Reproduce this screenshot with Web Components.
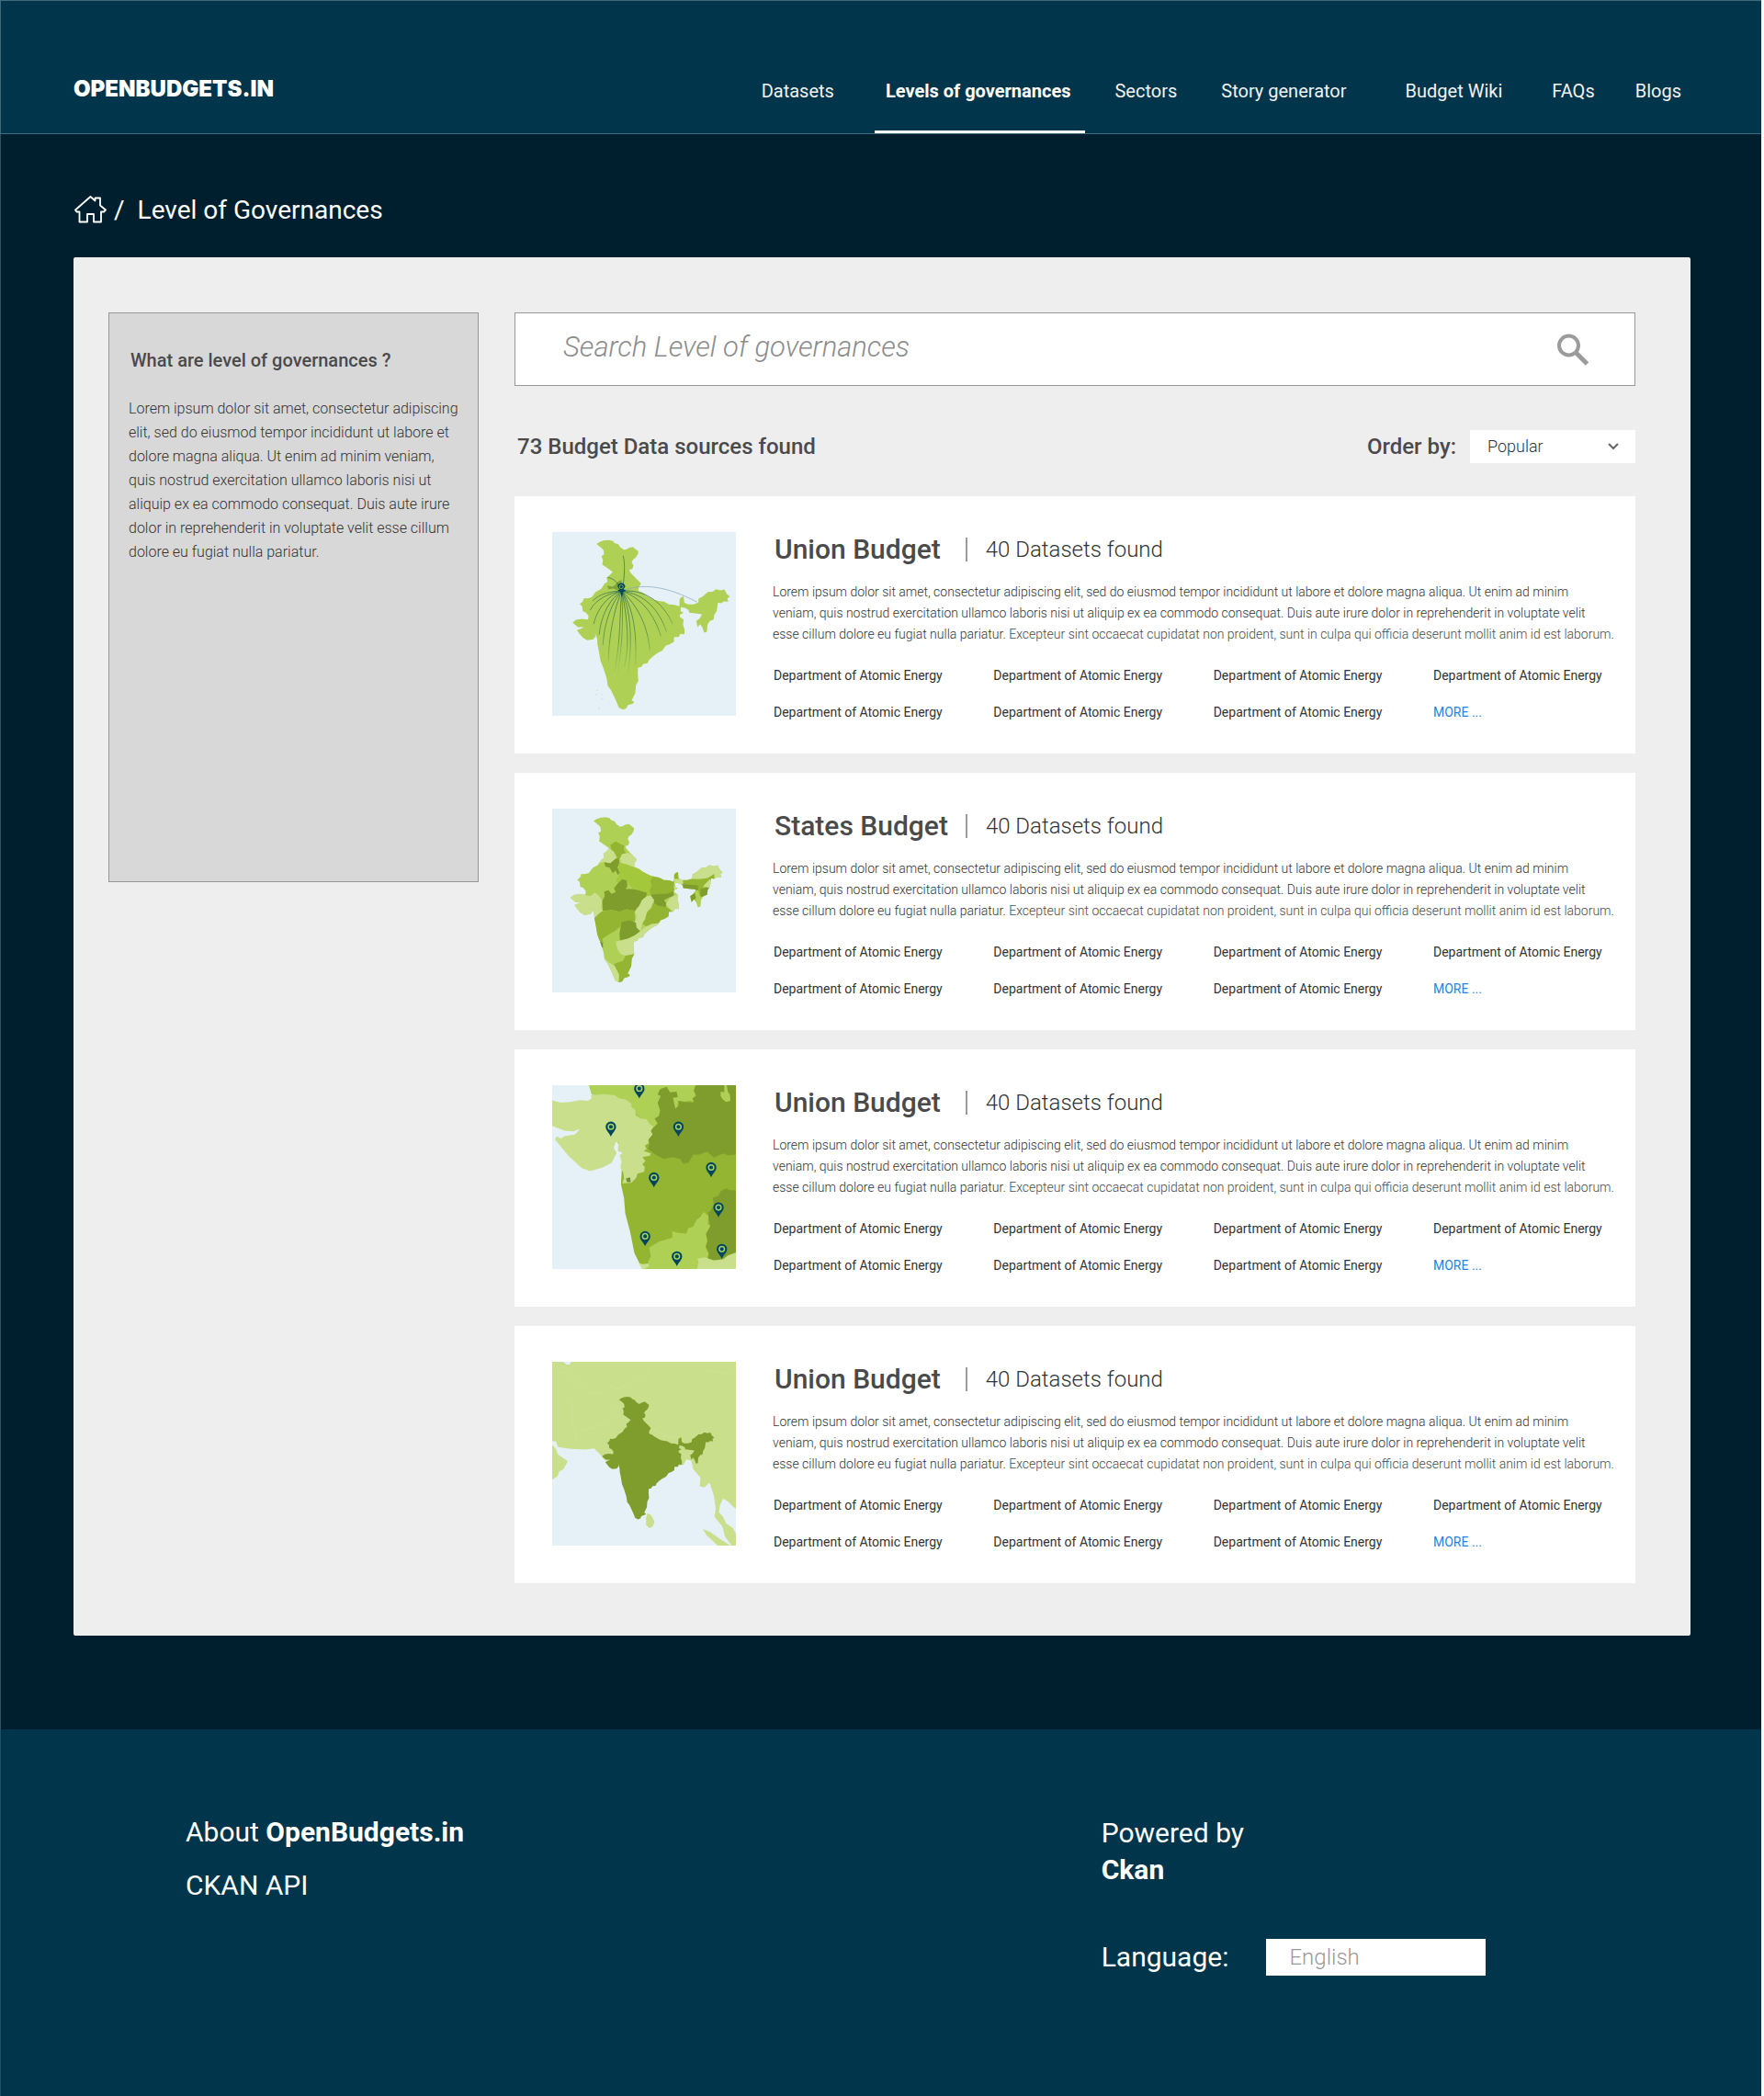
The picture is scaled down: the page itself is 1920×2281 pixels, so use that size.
<!DOCTYPE html>
<html lang="en">
<head>
<meta charset="utf-8">
<meta name="viewport" content="width=device-width, initial-scale=1">
<title>Level of Governances - OpenBudgets.in</title>
<style>
  html { background: #fff; }
  body { margin: 0; font-family: Roboto, "Liberation Sans", sans-serif; color: #4a4a4a; }
</style>
</head>
<body>
<ob-page>
  <ob-header slot="header"></ob-header>
  <ob-breadcrumb slot="crumb">Level of Governances</ob-breadcrumb>
  <ob-note slot="aside" heading="What are level of governances ?">Lorem ipsum dolor sit amet, consectetur adipiscing elit, sed do eiusmod tempor incididunt ut labore et dolore magna aliqua. Ut enim ad minim veniam, quis nostrud exercitation ullamco laboris nisi ut aliquip ex ea commodo consequat. Duis aute irure dolor in reprehenderit in voluptate velit esse cillum dolore eu fugiat nulla pariatur.</ob-note>
  <ob-search></ob-search>
  <ob-results-bar>73 Budget Data sources found</ob-results-bar>
  <ob-list>
    <ob-budget-card map="union">Union Budget</ob-budget-card>
    <ob-budget-card map="states">States Budget</ob-budget-card>
    <ob-budget-card map="cities">Union Budget</ob-budget-card>
    <ob-budget-card map="asia">Union Budget</ob-budget-card>
  </ob-list>
  <ob-footer slot="footer"></ob-footer>
</ob-page>

<script>
const define = (name, render) => customElements.define(name, class extends HTMLElement {
  connectedCallback() {
    if (this.shadowRoot) return;
    this.attachShadow({ mode: 'open' }).innerHTML = render(this);
  }
});

/* Outline of India, shared by three of the maps */
const INDIA = 'M181 98L190 92 203 87 220 85 235 88 240 95 252 99 258 108 270 117 280 115 288 110 300 108 306 113 318 122 316 132 310 142 300 150 296 158 302 168 298 180 288 182 292 191 300 200 312 212 327 227 319 240 318 251 334 258 345 267 362 276 372 281 388 285 402 287 418 296 436 297 452 302 453 278 458 272 466 269 468 290 480 296 498 296 514 290 515 277 528 270 545 255 560 254 572 246 586 250 600 247 606 260 617 270 609 276 612 287 598 286 588 292 578 290 576 305 574 318 566 330 564 345 552 350 544 362 542 385 533 388 528 372 520 360 512 370 507 350 518 342 526 328 510 326 484 323 482 314 470 307 457 305 456 318 466 323 453 330 454 337 466 345 464 362 469 378 469 393 455 392 450 402 435 402 434 418 420 426 408 430 396 447 380 455 365 466 352 478 348 488 334 490 328 500 317 502 316 520 318 545 310 560 308 585 296 610 304 614 300 620 284 625 278 636 267 640 254 633 248 618 240 600 228 575 218 562 214 536 204 505 194 480 189 450 184 425 183 408 176 388 178 400 170 410 150 413 136 404 124 390 117 380 130 375 140 370 120 370 103 355 114 346 132 343 153 345 155 333 146 322 136 318 134 302 126 295 136 286 140 275 152 276 165 272 178 255 196 245 207 228 217 222 214 208 222 202 234 190 218 178 200 166 202 150 197 138 206 132 204 118 196 110Z';

const C = { sea: '#e5f0f7', pale: '#c9df8c', lime: '#aed155', mid: '#a3c83b', green: '#93b532', dark: '#7f9d2c', ink: '#00465c' };
const shape = (fill, d) => `<path fill="${fill}" d="${d}"/>`;
const pin = (x, y) => `<g transform="translate(${x} ${y})"><path fill="${C.ink}" d="M0 29C-5 17-17 9-17-3A17 17 0 0 1 17-3C17 9 5 17 0 29Z"/><circle cy="-3" r="8.5" fill="none" stroke="#a9cf6a" stroke-width="4.5"/></g>`;
const ray = (d, w = 1.8) => `<path d="M264 252${d}" stroke-width="${w}"/>`;

const MAPS = {
  union: () => `<svg viewBox="36 59 601 601" role="img" aria-label="Map of India">
    <defs><radialGradient id="r" gradientUnits="userSpaceOnUse" cx="264" cy="252" r="290"><stop offset="0" stop-color="#0b4a50"/><stop offset=".55" stop-color="#2c6a47" stop-opacity=".9"/><stop offset="1" stop-color="#5f9d50" stop-opacity="0"/></radialGradient></defs>
    ${shape(C.lime, INDIA)}
    ${shape('#7fa13a', 'M216 234L232 238 240 234 250 222 262 215 266 240 250 250 236 244 220 246Z')}
    <g fill="none" stroke="url(#r)">
      ${ray('C272 215 276 165 268 136')}${ray('C250 222 236 210 218 208')}
      ${ray('C230 252 190 260 168 285')}${ray('C228 258 180 275 160 315')}${ray('C228 262 185 300 172 360')}
      ${ray('C226 276 195 330 190 395')}${ray('C234 285 206 350 202 430')}${ray('C246 290 222 380 220 480')}
      ${ray('C256 320 262 400 240 515')}${ray('C268 340 268 420 246 545', 1.4)}${ray('C282 340 290 430 272 500')}${ray('C298 330 300 440 276 570')}
      ${ray('C310 320 312 420 308 495')}${ray('C316 300 350 370 355 445')}${ray('C330 275 370 330 392 400')}
      ${ray('C335 260 385 310 410 385')}${ray('C340 245 400 290 430 360')}
    </g>
    <path d="M264 252C330 225 410 235 510 288" fill="none" stroke="#7fa5bd" stroke-width="2"/>
    <path fill="${C.ink}" d="M250 250L257 246 250 238A12.500 12.500 0 1 1 275 238L269 246 278 250 268 254 264 272 259 254Z"/><circle cx="262" cy="238" r="6" fill="none" stroke="#8fbf6a" stroke-width="2.500"/>
    <g fill="#bfdcb0"><circle cx="183" cy="577" r="1.800"/><circle cx="180" cy="590" r="2"/><circle cx="198" cy="590" r="1.500"/><circle cx="201" cy="604" r="1.800"/><circle cx="190" cy="636" r="2"/></g></svg>`,

  states: () => `<svg viewBox="36 59 601 601" role="img" aria-label="Map of Indian states">
    <defs><clipPath id="c"><path transform="matrix(.969 0 0 .975 -4 4)" d="${INDIA}"/></clipPath></defs>
    <g clip-path="url(#c)"><path fill="${C.lime}" d="M36 59H637V660H36Z"/>
    ${shape(C.green, 'M226 178L245 166 262 176 272 180 270 192 278 206 264 212 258 222 246 216 238 200 230 195Z')}
    ${shape(C.pale, 'M190 236L200 190 222 188 238 200 246 216 240 226 226 238 206 234Z')}
    ${shape(C.pale, 'M258 222L264 208 285 203 320 225 308 256 290 248 276 240 262 238Z')}
    ${shape(C.dark, 'M206 234L226 238 240 226 254 218 256 236 250 250 258 270 250 275 244 262 234 270 224 252 210 248Z')}
    ${shape(C.mid, 'M256 236L276 240 308 252 372 278 356 296 362 310 354 326 358 342 345 345 340 332 318 326 300 320 288 308 280 294 266 290 252 302 244 296 258 272 250 252Z')}
    ${shape(C.green, 'M370 276L384 286 440 294 438 318 432 332 410 340 385 338 358 340 354 326 362 310 356 296Z')}
    ${shape(C.dark, 'M358 340L385 338 410 338 432 330 434 344 418 350 402 358 410 370 408 382 384 378 370 370 366 356Z')}
    ${shape(C.pale, 'M436 290L470 288 470 400 428 394 408 372 420 352 434 344 444 340 434 318Z')}
    ${shape(C.green, 'M432 265H450V288H436Z')}
    ${shape(C.pale, 'M90 330L160 345 176 333 190 345 200 360 196 380 200 395 192 412 180 418 90 420Z')}
    ${shape(C.dark, 'M200 360L208 345 206 330 220 326 230 338 244 332 238 320 252 302 266 290 280 294 282 312 276 322 300 322 318 326 345 334 344 348 330 358 322 375 312 386 306 396 280 388 256 396 232 390 202 394Z')}
    ${shape(C.green, 'M170 420L196 396 232 390 256 396 280 388 306 392 306 412 310 430 290 426 262 430 258 446 240 460 222 470 200 485 204 500 190 510Z')}
    ${shape('#6f8752', 'M190 494L200 498 203 512 196 514Z')}
    ${shape(C.green, 'M345 398L362 384 366 368 384 378 408 380 425 392 430 420 390 434 362 440 346 446 330 434Z')}
    ${shape(C.pale, 'M330 358L344 346 358 344 370 358 358 382 346 398 340 420 330 436 326 460 312 448 302 440 312 412 306 396 320 378Z')}
    ${shape(C.dark, 'M262 430L290 424 310 432 312 448 324 460 306 474 284 484 258 492 256 470Z')}
    ${shape(C.pale, 'M244 494L258 490 284 484 306 474 324 460 340 446 362 436 390 432 340 500 308 520 304 536 284 542 262 536 250 520Z')}
    ${shape(C.green, 'M232 572L246 564 268 556 276 540 306 534 320 560 290 620 250 640 256 604Z')}
    ${shape(C.pale, 'M204 545L222 562 240 572 254 600 254 640 225 610Z')}
    ${shape(C.pale, 'M490 285L520 240 600 235 600 290 570 295 566 275 540 288 512 290Z')}
    ${shape(C.green, 'M464 292L520 290 545 286 566 272 566 288 546 298 530 315 520 345 512 322 464 308Z')}
    ${shape(C.dark, 'M460 306L512 310 514 326 460 326Z')}${shape(C.dark, 'M522 322L550 312 545 350 520 346Z')}
    ${shape(C.pale, 'M530 312L552 290 562 298 548 318Z')}${shape(C.dark, 'M484 346L502 334 506 348 500 366 484 366Z')}
    </g></svg>`,

  cities: () => `<svg viewBox="31 61 601 601" role="img" aria-label="Map of western India with city pins">
    ${shape(C.green, 'M200 61H632V662H326L300 610 286 540 270 480 266 430 256 385Z')}
    ${shape(C.lime, 'M151 61H500L497 76 500 95 494 102 496 116 482 112 466 114 448 112 440 126 444 138 434 136 420 110 396 130 376 190 360 200 330 180 290 140 200 100 160 92Z')}
    ${shape(C.sea, 'M240 240L262 280 256 384 200 384 200 300Z')}
    ${shape(C.pale, 'M31 110L58 118 90 116 122 110 148 112 160 104 158 94 200 90 236 94 250 104 272 108 290 122 290 132 303 142 304 158 320 170 340 172 350 188 362 196 354 212 360 222 346 238 346 252 334 258 340 270 330 276 354 284 350 292 326 296 336 308 326 320 334 328 332 344 310 350 306 364 290 380 260 382 266 366 264 348 254 330 258 312 252 290 262 282 246 276 248 250 240 246 232 266 242 282 226 314 196 330 156 342 128 332 84 292 58 260 40 238 46 228 60 236 70 228 106 222 122 204 100 212 72 210 31 194Z')}
    ${shape('#748f3a', 'M272 366L286 362 288 378 276 378Z')}
    ${shape(C.dark, 'M500 61H632V288L606 290 590 284 560 298 538 278 512 288 492 288 478 314 460 318 450 302 424 296 396 302 366 286 344 268 350 250 346 240 360 222 354 210 376 186 366 170 380 162 384 144 376 118 386 96 376 92 384 74 406 66 416 84 438 82 442 100 426 102 434 138 446 126 442 112 460 116 494 118 490 104 502 96 494 78Z')}
    ${shape(C.lime, 'M582 82L594 84 594 61 602 61 606 84 612 90 614 112 600 116 588 106 582 96Z')}
    ${shape(C.dark, 'M632 404L612 404 600 398 584 406 574 422 556 430 560 452 548 472 540 478 548 520 532 548 540 570 534 588 544 610 540 630 632 640Z')}
    ${shape(C.lime, 'M330 662L346 654 344 640 354 620 348 592 382 572 424 560 424 538 444 544 470 546 476 528 492 524 504 500 514 494 526 476 542 488 540 514 548 522 534 546 538 570 532 590 542 612 534 662Z')}
    ${shape(C.pale, 'M504 662L510 640 506 628 530 624 560 634 590 630 606 618 632 608V662Z')}
    ${shape(C.pale, 'M314 642L326 646 346 644 348 654 332 662H326Z')}
    ${[[316, 75], [223, 200], [444, 200], [364, 366], [551, 333], [575, 464], [335, 558], [439, 624], [586, 600]].map(p => pin(...p)).join('')}</svg>`,

  asia: () => `<svg viewBox="31 61 601 601" role="img" aria-label="Map of India within Asia">
    ${shape(C.pale, 'M31 61H632V542L620 532 606 518 590 508 580 530 576 552 590 568 600 590 622 604 632 624V662H618L596 632 588 600 562 568 566 540 560 500 546 456 528 472 514 468 516 440 492 412 486 384 470 380 460 398 380 400 250 400 200 380 190 366 168 344 140 348 90 346 50 340 44 322 31 320Z')}
    ${shape(C.sea, 'M66 61H94L88 70 78 70Z')}
    ${shape(C.sea, 'M242 400L440 397 432 412 430 440 380 560 240 560Z')}
    ${shape(C.pale, 'M31 332L42 344 50 364 82 386 68 412 54 420 48 436 31 446Z')}
    ${shape(C.pale, 'M342 556L354 562 366 584 360 600 348 605 338 594 338 572Z')}
    ${shape(C.pale, 'M524 608L548 618 580 640 614 662H572L556 646 536 628Z')}
    <g fill="none" stroke="#cfe39a" stroke-width="2"><path d="M40 100L68 92 90 104 110 130 150 160 190 165 220 140 250 150 300 120 340 100 352 78"/><path d="M100 200L96 250 110 300 104 330M100 200L60 160M106 286L160 280 200 262 240 210"/><path d="M340 270L400 300 440 310M540 90L620 100"/></g>
    <path fill="${C.dark}" transform="matrix(.713 0 0 .722 121 114)" d="${INDIA}"/></svg>`
};

define('ob-page', () => `
<style>
  :host { display: flex; flex-direction: column; min-height: 100vh; margin-right: 3px; background: #001f2e; }
  .edge { border-left: 1px solid #2f5160; flex: 1; padding-bottom: 102px; }
  .panel { display: grid; grid-template-columns: 403px minmax(0, 1fr); gap: 39px; align-items: start; margin: 0 77px 0 79px; padding: 60px 60px 57px 38px; background: #eee; border-radius: 2px; }
</style>
<slot name="header"></slot>
<div class="edge">
  <slot name="crumb"></slot>
  <div class="panel"><slot name="aside"></slot><main><slot></slot></main></div>
</div>
<slot name="footer"></slot>`);

define('ob-header', () => `
<style>
  :host { display: block; background: #00354b; border: solid #3f6b7c; border-width: 1px 0 1px 1px; }
  header { display: flex; align-items: flex-end; justify-content: space-between; padding: 84px 87px 0 79px; }
  .logo { color: #fff; font: 900 24px/24px Inter, sans-serif; text-decoration: none; padding-bottom: 36px; }
  nav { display: flex; }
  nav a { color: #f2f2f2; font-size: 20px; line-height: 24px; text-decoration: none; padding-bottom: 31px; border-bottom: 3px solid transparent; white-space: nowrap; }
  nav a + a { margin-left: 48px; }
  nav a.active { font-weight: 700; color: #fff; border-color: #fff; padding-left: 12px; padding-right: 16px; margin-left: 44px; }
  nav a.active + a { margin-left: 32px; }
  nav a.wide { margin-left: 64px; }
  nav a.mid { margin-left: 54px; }
  nav a.last { margin-left: 44px; }
</style>
<header><a class="logo" href="#">OPENBUDGETS.IN</a>
<nav aria-label="Main"><a href="#">Datasets</a><a class="active" aria-current="page" href="#">Levels of governances</a><a href="#">Sectors</a><a href="#">Story generator</a><a class="wide" href="#">Budget Wiki</a><a class="mid" href="#">FAQs</a><a class="last" href="#">Blogs</a></nav></header>`);

define('ob-breadcrumb', () => `
<style>
  :host { display: block; padding: 67px 79px 35px; color: #fff; font-size: 28px; line-height: 32px; }
  nav { display: flex; align-items: center; }
  a { display: flex; } svg { width: 36px; height: 32px; }
  .sep { margin: 0 14px 0 8px; }
</style>
<nav aria-label="Breadcrumb"><a href="#" aria-label="Home"><svg viewBox="0 1 36 32" fill="none" stroke="#fff" stroke-width="1.800" stroke-linejoin="round"><path d="M2 16.500L18.500 2 23.500 6.500V3.500H29V11.500L35 16.500 33 18.500H30V29.500H22V21H15V29.500H6.500V18.500H3.500Z"/></svg></a><span class="sep">/</span><span><slot></slot></span></nav>`);

define('ob-note', el => `
<style>
  :host { display: block; box-sizing: border-box; min-height: 620px; padding: 39px 18px 39px 21px; background: #d8d8d8; border: 1px solid #979797; }
  h2 { margin: 0 0 28px; padding-left: 2px; font-size: 20px; line-height: 24px; font-weight: 500; }
  p { margin: 0; font-size: 16px; line-height: 26px; font-weight: 300; color: #333; }
</style>
<h2>${el.getAttribute('heading')}</h2><p><slot></slot></p>`);

define('ob-search', () => `
<style>
  :host { display: block; }
  form { display: flex; align-items: center; height: 80px; box-sizing: border-box; padding: 0 48px 0 52px; background: #fff; border: 1px solid #979797; }
  input { flex: 1; min-width: 0; border: 0; padding: 0 0 4px; outline: 0; background: none; color: #4a4a4a; font: italic 300 31px/40px Roboto, sans-serif; }
  input::placeholder { color: #8c8c8c; opacity: 1; }
  button { display: flex; border: 0; padding: 0; background: none; } svg { width: 38px; height: 38px; }
</style>
<form role="search"><input type="search" aria-label="Search Level of governances" placeholder="Search Level of governances">
<button type="button" aria-label="Search"><svg viewBox="0 0 38 38" fill="none" stroke="#9b9b9b"><circle cx="14.500" cy="15" r="10.500" stroke-width="4"/><path d="M22 22.500L34.500 35" stroke-width="5"/></svg></button></form>`);

define('ob-results-bar', () => `
<style>
  :host { display: flex; align-items: center; justify-content: space-between; margin: 48px 0 36px; padding-left: 3px; height: 36px; font-size: 24px; line-height: 36px; font-weight: 500; }
  .order { display: flex; align-items: center; gap: 15px; }
  .box { display: grid; align-items: center; width: 180px; }
  .box > * { grid-area: 1 / 1; }
  select { appearance: none; border: 0; border-radius: 0; margin: 0; width: 100%; height: 36px; padding: 0 40px 0 19px; background: #fff; color: #333; font: 300 18px/36px Roboto, sans-serif; }
  svg { width: 14px; height: 10px; justify-self: end; margin-right: 17px; pointer-events: none; }
</style>
<span><slot></slot></span>
<div class="order"><label for="order">Order by:</label><div class="box"><select id="order"><option>Popular</option></select><svg viewBox="0 0 14 10" fill="none" stroke="#666" stroke-width="2"><path d="M2 2L7 7 12 2"/></svg></div></div>`);

define('ob-list', () => `<style>:host { display: flex; flex-direction: column; gap: 21px; }</style><slot></slot>`);

define('ob-map', el => `
<style>:host { display: block; width: 200px; height: 200px; background: ${C.sea}; } svg { display: block; width: 100%; height: 100%; }</style>
${MAPS[el.getAttribute('kind')]()}`);

define('ob-budget-card', el => `
<style>
  :host { display: grid; grid-template-columns: 200px minmax(0, 1fr); gap: 40px; padding: 39px 18px 35px 41px; background: #fff; }
  .head { display: flex; align-items: center; line-height: 38px; padding-left: 2px; }
  h2 { margin: 0; font-size: 30px; font-weight: 500; }
  .count { margin-left: 27px; padding-left: 20px; border-left: 2px solid #9b9b9b; font-size: 24px; line-height: 26px; font-weight: 300; color: #333; }
  h2.long + .count { margin-left: 19px; }
  p { margin: 16px 0 23px; font-size: 14px; line-height: 23px; font-weight: 300; color: #333; }
  p .soft { color: #4a4a4a; }
  ul { list-style: none; margin: 0; padding: 0 0 0 1px; display: grid; grid-template-columns: repeat(3, 1fr) 202px; row-gap: 20px; font-size: 14px; line-height: 20px; }
  a { color: #333; text-decoration: none; } a.more { color: #2a80e0; }
</style>
<ob-map kind="${el.getAttribute('map')}"></ob-map>
<div>
  <div class="head"><h2${el.textContent.length > 12 ? ' class="long"' : ''}><slot></slot></h2><span class="count">40 Datasets found</span></div>
  <p><span>Lorem ipsum dolor sit amet, consectetur adipiscing elit, sed do eiusmod tempor incididunt ut labore et dolore magna aliqua. Ut enim ad minim</span><br>
  <span>veniam, quis nostrud exercitation ullamco laboris nisi ut aliquip ex ea commodo consequat. Duis aute irure dolor in reprehenderit in voluptate velit</span><br>
  <span>esse cillum dolore eu fugiat nulla pariatur.</span> <span class="soft">Excepteur sint occaecat cupidatat non proident, sunt in culpa qui officia deserunt mollit anim id est laborum.</span></p>
  <ul>${'<li><a href="#">Department of Atomic Energy</a></li>'.repeat(7)}<li><a class="more" href="#">MORE ...</a></li></ul>
</div>`);

define('ob-footer', () => `
<style>
  :host { display: grid; grid-template-columns: 58% 42%; padding: 93px 0 131px 201px; background: #00354b; border-left: 1px solid #1f4f63; color: #fff; font-size: 30px; }
  a { color: #fff; text-decoration: none; }
  .links { display: flex; flex-direction: column; gap: 20px; line-height: 38px; }
  .right { line-height: 40px; padding-left: 2px; }
  .right a { font-weight: 700; display: block; }
  .lang { display: flex; align-items: center; gap: 41px; margin-top: 55px; }
  select { appearance: none; border: 0; border-radius: 0; margin: 0; width: 239px; height: 40px; padding: 0 25px; background: #fff; color: #999; font: 300 24px/40px Roboto, sans-serif; }
</style>
<div class="links"><a href="#">About <b>OpenBudgets.in</b></a><a href="#">CKAN API</a></div>
<div class="right"><div>Powered by <a href="#">Ckan</a></div>
<div class="lang"><label for="lang">Language:</label><select id="lang"><option>English</option></select></div></div>`);
</script>
</body>
</html>
